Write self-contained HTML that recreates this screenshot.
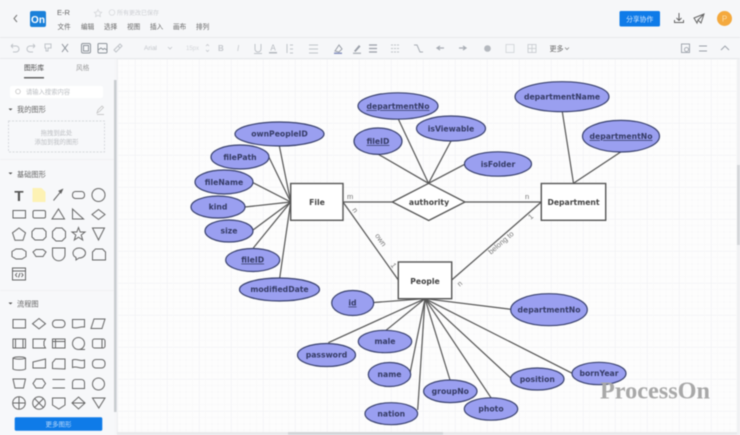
<!DOCTYPE html>
<html><head><meta charset="utf-8">
<style>
html,body{margin:0;padding:0;background:#f6f7f9;width:740px;height:435px;overflow:hidden}
svg{display:block;filter:blur(.45px)}
text{font-family:"Liberation Sans","Noto Sans CJK SC",sans-serif}
.e ellipse{fill:#9a9ff0;stroke:#39416e;stroke-width:1.2}
.e text{font-family:"DejaVu Sans",sans-serif;font-weight:bold;font-size:7.7px;fill:#353b66;text-anchor:middle}
.u{text-decoration:underline}
.l line{stroke:#555;stroke-width:1.2}
.b rect{fill:#fff;stroke:#555;stroke-width:1.4}
.t{font-family:"DejaVu Sans",sans-serif;font-weight:bold;font-size:7.7px;fill:#444;text-anchor:middle}
.m{font-size:7.500px;fill:#777}
.i *{fill:none;stroke:#666;stroke-width:1}
.tb *{fill:none;stroke:#c0c4c9;stroke-width:1}
.tb2 *{fill:none;stroke:#8d939a;stroke-width:1}
</style></head><body>
<svg width="740" height="435" viewBox="0 0 740 435" xmlns="http://www.w3.org/2000/svg">
<defs>
<pattern id="g" x="135" y="59" width="32" height="32" patternUnits="userSpaceOnUse">
<rect width="32" height="32" fill="#fdfdfd"/>
<path d="M0 0H32M0 0V32" stroke="#eeeff1" stroke-width="1" fill="none"/>
<path d="M6.4 0V32M12.8 0V32M19.2 0V32M25.6 0V32M0 6.4H32M0 12.8H32M0 19.2H32M0 25.6H32" stroke="#f8f8f9" stroke-width=".6" fill="none"/>
</pattern>
</defs>
<rect width="740" height="435" fill="#f6f7f9"/>
<rect x="118" y="59" width="619" height="373" fill="url(#g)"/>

<!-- header -->
<path d="M17 15l-3 3.500 3 3.500" fill="none" stroke="#777" stroke-width="1"/>
<rect x="30" y="11" width="16" height="16" rx="2" fill="#1a80d9"/>
<text x="38" y="23" font-size="10" font-weight="bold" fill="#fff" text-anchor="middle">On</text>
<text x="57" y="15" font-size="7.500" fill="#666">E-R</text>
<path d="M98 9.500l1.200 2.500 2.500.3-1.800 1.800.5 2.500-2.400-1.300-2.400 1.300.5-2.500-1.800-1.800 2.500-.3z" fill="none" stroke="#d4d6d9" stroke-width=".8"/>
<circle cx="112" cy="12.500" r="2.800" fill="none" stroke="#d4d6d9" stroke-width=".7"/>
<text x="117" y="15" font-size="6" fill="#ccced2">所有更改已保存</text>
<g font-size="6.600" fill="#666">
<text x="57.500" y="29">文件</text><text x="81" y="29">编辑</text><text x="104" y="29">选择</text><text x="127" y="29">视图</text><text x="150" y="29">插入</text><text x="173" y="29">画布</text><text x="196" y="29">排列</text>
</g>
<rect x="619.500" y="11" width="40.500" height="15.500" rx="1.500" fill="#0f7be8"/>
<text x="639.700" y="21.500" font-size="6.800" fill="#d5e8ff" text-anchor="middle">分享协作</text>
<g class="i"><path d="M679 13v7M676.500 18l2.500 2.500 2.500-2.500M674.500 20v2.500h9V20"/><path d="M694 18l10-4-3 9-3-3-1 3zM698 20l6-6"/></g>
<circle cx="724.500" cy="18.500" r="7.500" fill="#f4a93e"/>
<text x="724.500" y="21.500" font-size="8" fill="#fbdca8" text-anchor="middle">P</text>
<line x1="0" y1="37.500" x2="740" y2="37.500" stroke="#e8e9ec"/>
<line x1="0" y1="58.500" x2="740" y2="58.500" stroke="#e8e9ec"/>

<!-- toolbar -->
<g class="tb">
<path d="M11 46h5a2.500 2.500 0 0 1 0 6h-3M11 46l2-2M11 46l2 2"/>
<path d="M35 46h-5a2.500 2.500 0 0 0 0 6h3M35 46l-2-2M35 46l-2 2"/>
<path d="M45 44h6v4h-3v3h-2v-3h-1z"/>
<path d="M114 50l4-4 2 2-4 4zM118 46l2-2 2 2-2 2"/>
<path d="M255 44v5a3 3 0 0 0 6 0v-5M254 53.500h8"/>
<path d="M287 44v9M290 45h3M290 49h3M290 53h3"/>
<path d="M309 45h9M309 49h9M309 53h9"/>
</g>
<g class="tb2">
<path d="M62 44l6 8M68 44l-6 8"/>
<rect x="81.500" y="43.500" width="9" height="9.500" rx="1.500"/>
<rect x="83.500" y="45.500" width="5" height="5.500"/>
<rect x="98" y="43.500" width="9" height="9.500" rx="1"/>
<path d="M98 50l3-2 2 1.500 1.500-1 2.500 1.500"/>
</g>
<text x="144" y="50" font-size="6.500" fill="#c2c5ca">Arial</text>
<text x="186" y="50" font-size="6" fill="#d4d6da">15px</text>
<path d="M168 47l2 2 2-2M206 46l1.500-1.500 1.500 1.500M206 50l1.500 1.500 1.500-1.500" fill="none" stroke="#c4c7cc" stroke-width=".8"/>
<text x="218" y="51" font-size="8" font-weight="bold" fill="#c4c7cc">B</text>
<text x="237" y="51" font-size="8" font-style="italic" fill="#c4c7cc">I</text>
<text x="273" y="50.500" font-size="8" fill="#b4b8be" text-anchor="middle">A</text>
<rect x="269" y="52" width="8" height="1.500" fill="#b4b8be"/>
<path d="M335 51l4-6 3 4-3 3z" fill="none" stroke="#9a9fa8" stroke-width="1"/>
<rect x="334" y="52.500" width="8" height="1.500" fill="#8894c0"/>
<path d="M354 51l5-6 1.500 1.500-5 5.500z" fill="#9a9fa8"/>
<rect x="353" y="52.500" width="8" height="1.500" fill="#b4b8be"/>
<path d="M369 45h8M369 48.500h8M369 52h8" stroke="#9a9fa8" stroke-width="1.200" fill="none"/>
<path d="M391 45h8M391 48.500h8M391 52h8" stroke="#c0c4c9" stroke-width="1" stroke-dasharray="2 1" fill="none"/>
<path d="M414 45h3l3 7h3" stroke="#a8adb4" stroke-width="1" fill="none"/>
<path d="M437 48h7M440 46l-3 2 3 2" stroke="#a8adb4" stroke-width="1.200" fill="none"/>
<path d="M459 48h7M463 46l3 2-3 2" stroke="#a8adb4" stroke-width="1.200" fill="none"/>
<circle cx="487.500" cy="48.500" r="3.300" fill="#b4b8be"/>
<rect x="506" y="44.500" width="8" height="8" fill="none" stroke="#cfd2d6" stroke-width=".8"/>
<rect x="528" y="44.500" width="8" height="8" fill="none" stroke="#c4c7cc" stroke-width=".8"/>
<path d="M528 48.500h8M532 44.500v8" stroke="#c4c7cc" stroke-width=".7"/>
<text x="549.500" y="51" font-size="7" fill="#666">更多</text>
<path d="M565 47.500l2 2 2-2" fill="none" stroke="#888" stroke-width=".8"/>
<rect x="681.500" y="44" width="8" height="8.500" fill="none" stroke="#9a9fa8" stroke-width=".9"/>
<circle cx="686.500" cy="49.500" r="2" fill="none" stroke="#9a9fa8" stroke-width=".8"/>
<path d="M699 46h8M699 51h8" stroke="#9a9fa8" stroke-width=".9"/>
<path d="M721 50l4-4 4 4" fill="none" stroke="#9a9fa8" stroke-width=".9"/>

<!-- sidebar -->
<rect x="0" y="59" width="114" height="376" fill="#f7f8fa"/>
<rect x="114" y="80" width="2.500" height="332" fill="#c9ccd0"/>
<rect x="116.500" y="59" width="1.500" height="376" fill="#f0f1f3"/>
<text x="24" y="70" font-size="6.700" fill="#444">图形库</text>
<text x="76" y="70" font-size="6.700" fill="#999">风格</text>
<rect x="24" y="77" width="20" height="1.500" fill="#666"/>
<rect x="10" y="86" width="93" height="12" rx="2" fill="#fff"/>
<circle cx="18" cy="91.500" r="2.300" fill="none" stroke="#bbb" stroke-width=".7"/>
<text x="26" y="94" font-size="6.300" fill="#bbbec2">请输入搜索内容</text>
<path d="M8.500 108.500h4l-2 2z" fill="#555"/>
<text x="17" y="112" font-size="7.200" fill="#666">我的图形</text>
<path d="M97 113l1-3 4-4 1.500 1.500-4 4zM97 114.500h7" fill="none" stroke="#bbb" stroke-width=".7"/>
<rect x="8.500" y="121" width="96" height="31" fill="none" stroke="#ccced2" stroke-width=".7" stroke-dasharray="2 1.500"/>
<text x="56.500" y="135" font-size="6.300" fill="#bcbec2" text-anchor="middle">拖拽到此处</text>
<text x="56.500" y="144" font-size="6.300" fill="#bcbec2" text-anchor="middle">添加到我的图形</text>
<rect x="0" y="159" width="114" height="1" fill="#f1f2f4"/>
<path d="M8.500 172.500h4l-2 2z" fill="#555"/>
<text x="17" y="177" font-size="7.200" fill="#666">基础图形</text>
<path d="M8.500 302.500h4l-2 2z" fill="#555"/>
<text x="17" y="306.500" font-size="7.200" fill="#666">流程图</text>
<rect x="0" y="290" width="114" height="1" fill="#f1f2f4"/>

<text x="19" y="201" font-size="15" font-weight="bold" fill="#555" text-anchor="middle">T</text>
<path d="M32.500 188h9l4 4v10h-13z" fill="#fdf2b4"/>
<g class="i">
<path d="M53.500 200.500l9-11"/><path d="M62.500 189.500l-3.500 1.500 2 2z" style="fill:#555"/>
<rect x="72.500" y="191.500" width="12" height="7" rx="3"/>
<circle cx="98.500" cy="195" r="6.500"/>
<rect x="13" y="210.500" width="12.500" height="7.500"/>
<rect x="33" y="210.500" width="12.500" height="7.500" rx="1.500"/>
<path d="M58.500 209l6 10h-12.500z"/>
<path d="M72.500 209l11 10h-11z"/>
<path d="M98.500 209.500l6.500 5-6.500 5-6.500-5z"/>
<path d="M19 228l6.500 4.800-2.500 7.500h-8l-2.500-7.500z"/>
<path d="M35 228.500h8l3 3v5.500l-3 3h-8l-3-3v-5.500z"/>
<path d="M56 228h6l3.500 3.500v6l-3.500 3.500h-6l-3.500-3.500v-6z"/>
<path d="M78.500 227.500l1.700 4.500h4.800l-3.800 3 1.500 5-4.200-2.800-4.200 2.800 1.500-5-3.800-3h4.800z"/>
<path d="M92.500 228h12l-6 12z"/>
<path d="M16 249h6l4 2.500v5l-4 2.500h-6l-4-2.500v-5z"/>
<path d="M33 252l3-2.500h7l3 2.500-3 4.500h-7z"/>
<path d="M52.500 248h12.500v6.500a6.200 6.200 0 0 1-12.500 0z"/>
<path d="M79 248c4 0 6.500 2.500 6.500 5s-2.500 5-6.500 5l-3 2v-2.500c-2-1-3-2.500-3-4.500 0-2.500 2.500-5 6-5z"/>
<path d="M92.500 260v-8l3-3h7l3 3v8z"/>
<rect x="12.500" y="268" width="13" height="12"/>
<path d="M12.500 271h13"/>
<path d="M17 273l-1.500 2 1.500 2M21.500 273l1.500 2-1.500 2M18.500 277.500l1.500-4.500"/>

<rect x="13" y="319.500" width="12.500" height="8.500"/>
<path d="M39 318.500l6.500 5.200-6.500 5.200-6.500-5.200z"/>
<rect x="52.500" y="320" width="12.500" height="7.500" rx="3.500"/>
<path d="M72.500 319.500h12v7.500c-4-1-7 2-12 .5z"/>
<path d="M94 319h11l-3 9.500h-11z"/>
<rect x="13" y="339" width="12.500" height="9"/><path d="M15.500 339v9M23 339v9"/>
<path d="M33 339h12.500l-1.500 2.500v4l1.500 2.500H33z"/>
<rect x="52.500" y="339" width="12.500" height="9"/><path d="M52.500 341.500h12.500M55.500 339v9"/>
<circle cx="78.500" cy="343.500" r="6"/><path d="M79 349.500h6"/>
<rect x="92.500" y="339" width="12.500" height="9" rx="2"/><path d="M102 339v9"/>
<path d="M13 358c2-1.500 10.500-1.500 12.500 0v11c-2 1.500-10.500 1.500-12.500 0zM13 358c2 1.500 10.500 1.500 12.500 0"/>
<path d="M33 362l12.500-3v9H33z"/>
<path d="M52.500 368.500v-6l3-3.500h9.500v10z"/>
<path d="M72.500 360c4-2 8 2 12 0v7.500c-4 2-8-2-12 0z"/>
<rect x="92.500" y="359.500" width="12.500" height="8.500" rx="3.500"/>
<path d="M13 379h12.500l-2 9h-8.500z"/>
<path d="M36 379h6.500l3 4.500-3 4.500H36l-3-4.500z"/>
<path d="M52.500 379.500h12.500M52.500 388h12.500"/>
<path d="M72.500 388.500v-6a3 3 0 0 1 3-3h6a3 3 0 0 1 3 3v6z"/>
<circle cx="98.500" cy="384" r="6"/>
<circle cx="19" cy="403" r="6.300"/><path d="M12.700 403h12.600M19 396.700v12.600"/>
<circle cx="39" cy="403" r="6.300"/><path d="M34.500 398.500l9 9M43.500 398.500l-9 9"/>
<path d="M52.500 398h12.500v7l-6.200 4-6.300-4z"/>
<path d="M78.500 397l6.500 6-6.500 6-6.500-6zM72 403h13"/>
<path d="M92.500 398h12.500l-6.200 10z"/>
</g>
<rect x="14.700" y="417.300" width="87.600" height="13.400" rx="1.500" fill="#0f7be8"/>
<text x="58.500" y="426.500" font-size="6.500" fill="#b9d9fb" text-anchor="middle">更多图形</text>
<rect x="117" y="432" width="623" height="3" fill="#e9eaec"/>
<rect x="288" y="432" width="155" height="3" fill="#d4d6d9"/>
<rect x="737" y="59" width="3" height="376" fill="#f0f1f3"/>
<rect x="737" y="165" width="3" height="80" fill="#d4d6d9"/>

<!-- lines -->
<g class="l">
<line x1="279.300" y1="145.700" x2="290.700" y2="202"/>
<line x1="269" y1="157.300" x2="290.700" y2="202"/>
<line x1="253" y1="182.700" x2="290.700" y2="202"/>
<line x1="245" y1="207" x2="290.700" y2="202"/>
<line x1="253" y1="230" x2="290.700" y2="202"/>
<line x1="253.300" y1="248" x2="290.700" y2="202"/>
<line x1="279.700" y1="278" x2="290.700" y2="202"/>
<line x1="343" y1="202" x2="392.300" y2="202"/>
<line x1="343" y1="202" x2="398.300" y2="280"/>
<line x1="465" y1="202" x2="541.300" y2="202"/>
<line x1="451.700" y1="280" x2="541.300" y2="202"/>
<line x1="398.300" y1="119" x2="428.500" y2="183.300"/>
<line x1="378.300" y1="154.300" x2="428.500" y2="183.300"/>
<line x1="451" y1="141" x2="428.500" y2="183.300"/>
<line x1="464.700" y1="164.300" x2="428.500" y2="183.300"/>
<line x1="562.300" y1="111.700" x2="573.500" y2="183.300"/>
<line x1="620.700" y1="152" x2="573.500" y2="183.300"/>
<line x1="425" y1="298.700" x2="373.700" y2="302.500"/>
<line x1="425" y1="298.700" x2="328.300" y2="342.700"/>
<line x1="425" y1="298.700" x2="386" y2="330.300"/>
<line x1="425" y1="298.700" x2="410" y2="373.300"/>
<line x1="425" y1="298.700" x2="417.700" y2="410"/>
<line x1="425" y1="298.700" x2="450" y2="380"/>
<line x1="425" y1="298.700" x2="491" y2="397.700"/>
<line x1="425" y1="298.700" x2="510.700" y2="378"/>
<line x1="425" y1="298.700" x2="572.300" y2="373.300"/>
<line x1="425" y1="298.700" x2="510.700" y2="309.300"/>
</g>
<!-- boxes -->
<g class="b">
<rect x="290.700" y="183.500" width="52.300" height="36.800"/>
<rect x="541.300" y="183.500" width="64.400" height="36.800"/>
<rect x="398.300" y="262" width="53.400" height="36.700"/>
</g>
<path d="M392.300 202L428.700 183.300L465 202L428.700 220.500Z" fill="#fff" stroke="#555" stroke-width="1.300"/>
<text class="t" x="317" y="205">File</text>
<text class="t" x="573.500" y="205">Department</text>
<text class="t" x="425" y="284">People</text>
<text class="t" x="429" y="205">authority</text>
<!-- labels -->
<text class="m" x="347" y="199">m</text>
<text class="m" x="354" y="212" transform="rotate(55 355 209)">n</text>
<text class="m" x="373" y="241" transform="rotate(55 379 240)">own</text>
<text class="m" x="392" y="266" transform="rotate(55 392 264)">1</text>
<text class="m" x="525" y="199">n</text>
<text class="m" x="529" y="219" transform="rotate(-41 531 217)">1</text>
<text class="m" x="481" y="248" transform="rotate(-41 495 238)">belong to</text>
<text class="m" x="458" y="286" transform="rotate(-41 460 284)">n</text>
<!-- ellipses -->
<g class="e">
<ellipse cx="279.500" cy="134" rx="44.500" ry="12"/><text x="279.500" y="136.500">ownPeopleID</text>
<ellipse cx="240" cy="157" rx="29" ry="12"/><text x="240" y="160">filePath</text>
<ellipse cx="224" cy="182" rx="29" ry="12"/><text x="224" y="185">fileName</text>
<ellipse cx="218" cy="207" rx="27" ry="11"/><text x="218" y="209.500">kind</text>
<ellipse cx="229" cy="231" rx="24" ry="11"/><text x="229" y="233.500">size</text>
<ellipse cx="252.700" cy="260" rx="27" ry="11.500"/><text class="u" x="252.700" y="262.500">fileID</text>
<ellipse cx="279.500" cy="289.500" rx="40" ry="11.500"/><text x="279.500" y="292">modifiedDate</text>
<ellipse cx="352.700" cy="303" rx="21" ry="12.500"/><text class="u" x="352.500" y="305.500">id</text>
<ellipse cx="385" cy="341.500" rx="26.700" ry="11.200"/><text x="385" y="344">male</text>
<ellipse cx="326.500" cy="355" rx="29" ry="11.500"/><text x="326.500" y="357.500">password</text>
<ellipse cx="389.500" cy="374.500" rx="21.200" ry="12"/><text x="389.500" y="377">name</text>
<ellipse cx="391.300" cy="413.700" rx="26.300" ry="11"/><text x="391.300" y="416.500">nation</text>
<ellipse cx="450.300" cy="391.300" rx="26.700" ry="11.300"/><text x="450.300" y="394">groupNo</text>
<ellipse cx="491" cy="409" rx="26.700" ry="11.200"/><text x="491" y="411.500">photo</text>
<ellipse cx="537.300" cy="379" rx="26.700" ry="11"/><text x="537.300" y="382">position</text>
<ellipse cx="599" cy="373.500" rx="27" ry="11.200"/><text x="599" y="376">bornYear</text>
<ellipse cx="549" cy="309.700" rx="38.300" ry="16"/><text x="549" y="312.500">departmentNo</text>
<ellipse cx="562" cy="96.700" rx="47" ry="15"/><text x="562" y="99.500">departmentName</text>
<ellipse cx="621" cy="136.200" rx="38.500" ry="15.800"/><text class="u" x="621" y="139">departmentNo</text>
<ellipse cx="451" cy="128.500" rx="34.500" ry="12.500"/><text x="451" y="131.500">isViewable</text>
<ellipse cx="498" cy="164" rx="33.500" ry="12.200"/><text x="498" y="167">isFolder</text>
<ellipse cx="398" cy="106" rx="40" ry="13.200"/><text class="u" x="398" y="109">departmentNo</text>
<ellipse cx="378" cy="141.200" rx="24" ry="13.200"/><text class="u" x="378" y="144">fileID</text>
</g>
<text x="600" y="398.500" style="font-family:'Liberation Serif',serif" font-size="24" font-weight="bold" fill="#a8a8a8" textLength="110" lengthAdjust="spacingAndGlyphs">ProcessOn</text>
</svg>
</body></html>
